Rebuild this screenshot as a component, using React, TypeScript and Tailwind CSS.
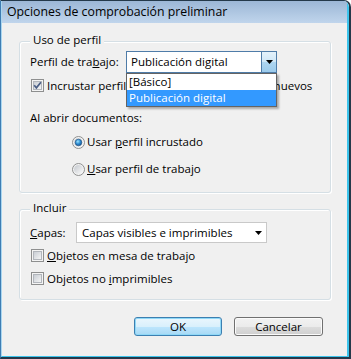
import React from "react";

function CheckBox({ checked }: { checked?: boolean }) {
  return (
    <svg width="13" height="13" viewBox="0 0 13 13" className="block shrink-0">
      <defs>
        <linearGradient id="cbg" x1="0" y1="0" x2="1" y2="1">
          <stop offset="0" stopColor="#c6cbd2" />
          <stop offset="1" stopColor="#f7f7f7" />
        </linearGradient>
      </defs>
      <rect x="0.5" y="0.5" width="12" height="12" fill="#f4f4f4" stroke="#8e8f8f" />
      <rect x="2.5" y="2.5" width="8" height="8" fill="url(#cbg)" stroke="#b2b6bc" />
      {checked && (
        <path d="M3.2 6.3 L5.4 8.9 L9.9 3.3" fill="none" stroke="#4a5e85" strokeWidth="1.7" />
      )}
    </svg>
  );
}

function Radio({ checked }: { checked?: boolean }) {
  return (
    <svg width="13" height="13" viewBox="0 0 13 13" className="block shrink-0">
      <defs>
        <linearGradient id="rbg" x1="0" y1="0" x2="1" y2="1">
          <stop offset="0" stopColor="#c4c8ce" />
          <stop offset="1" stopColor="#fafafa" />
        </linearGradient>
        <radialGradient id="rdot" cx="0.4" cy="0.35" r="0.75">
          <stop offset="0" stopColor="#9be4ff" />
          <stop offset="0.5" stopColor="#2b8ad0" />
          <stop offset="1" stopColor="#154c86" />
        </radialGradient>
      </defs>
      <circle cx="6.5" cy="6.5" r="6" fill="#f3f3f3" stroke="#8e8f8f" />
      <circle cx="6.5" cy="6.5" r="4.5" fill="url(#rbg)" />
      {checked && <circle cx="6.5" cy="6.5" r="3.3" fill="url(#rdot)" stroke="#1f4f7f" strokeWidth="0.6" />}
    </svg>
  );
}

function Arrow() {
  return (
    <svg width="7" height="4" viewBox="0 0 7 4" className="block shrink-0">
      <path d="M0 0 H7 L3.5 4 Z" fill="#000" />
    </svg>
  );
}

function Group({ title, className, children }: { title: string; className: string; children: React.ReactNode }) {
  return (
    <div
      className={
        "relative border border-[#d5dfe5] rounded-[3px] shadow-[inset_1px_1px_0_#ffffff,1px_1px_0_#ffffff] " +
        className
      }
    >
      <span className="absolute left-[10px] -top-[10px] px-[3px] bg-[#f0f0f0] leading-[16px]">{title}</span>
      {children}
    </div>
  );
}

export default function App() {
  return (
    <div className="w-[351px] h-[359px] flex flex-col overflow-hidden rounded-tr-[7px] border-t border-r-2 border-b-2 border-[#24394a] border-l border-l-[#3e7db3] bg-[#f0f0f0] font-['Open_Sans',sans-serif] text-[11.5px] leading-[16px] text-black">
      <div className="flex-1 flex flex-col rounded-tr-[6px] border-r-2 border-b border-[#3cc4ec] border-l border-l-[#a9d6f0]">
        <div className="h-[22px] shrink-0 pl-[5px] pt-[3px] text-[12.3px] leading-[16px] bg-[linear-gradient(to_bottom,#9cb7d6,#c0d5ec)]">
          Opciones de comprobación preliminar
        </div>
        <div className="flex flex-col pl-[17px] pr-[16px]">
          <Group title="Uso de perfil" className="mt-[18px] h-[152px]">
            <div className="flex flex-col pl-[10px] pt-[9px]">
              <div className="flex items-center h-[22px]">
                <span className="w-[96px] shrink-0 whitespace-nowrap">
                  Perfil de tra<u>b</u>ajo:
                </span>
                <div className="relative z-10 w-[151px] h-[22px] flex items-center border border-[#4f7ca8] bg-white">
                  <span className="flex-1 pl-[4px] whitespace-nowrap">Publicación digital</span>
                  <div className="w-[15px] h-full flex items-center justify-center border-l border-[#4f7ca8] bg-[linear-gradient(to_bottom,#e4f2fb_0%,#cfe7f7_50%,#aed6f1_50%,#9ccbec_100%)]">
                    <Arrow />
                  </div>
                  <div className="absolute -left-[1px] top-[21px] w-[151px] h-[34px] flex flex-col border border-[#646464] bg-white shadow-[2px_2px_2px_rgba(0,0,0,0.3)]">
                    <div className="h-[16px] pl-[2px] whitespace-nowrap leading-[16px]">[Básico]</div>
                    <div className="h-[16px] pl-[2px] whitespace-nowrap leading-[16px] bg-[#3399ff] text-white">
                      Publicación digital
                    </div>
                  </div>
                </div>
              </div>
              <div className="flex items-center gap-[3px] h-[13px] mt-[6px] pl-[1px]">
                <CheckBox checked />
                <span className="whitespace-nowrap">
                  Incrustar perfil <span className="invisible">de trabajo en documentos</span> nuevos
                </span>
              </div>
              <div className="h-[16px] mt-[18px] whitespace-nowrap">Al abrir documentos:</div>
              <div className="flex items-center gap-[2px] h-[16px] mt-[8px] ml-[42px]">
                <Radio checked />
                <span className="whitespace-nowrap">
                  Usar <u>p</u>erfil incrustado
                </span>
              </div>
              <div className="flex items-center gap-[2px] h-[16px] mt-[11px] ml-[42px]">
                <Radio />
                <span className="whitespace-nowrap">
                  <u>U</u>sar perfil de trabajo
                </span>
              </div>
            </div>
          </Group>
          <Group title="Incluir" className="mt-[16px] h-[91px]">
            <div className="flex flex-col pl-[10px] pt-[12px]">
              <div className="flex items-center h-[21px]">
                <span className="w-[46px] shrink-0">
                  <u>C</u>apas:
                </span>
                <div className="w-[191px] h-[21px] flex items-center border border-[#c9c9c9] bg-white pl-[5px] pr-[4px]">
                  <span className="flex-1 whitespace-nowrap">Capas visibles e imprimibles</span>
                  <Arrow />
                </div>
              </div>
              <div className="flex items-center gap-[3px] h-[13px] mt-[6px] pl-[1px]">
                <CheckBox />
                <span className="whitespace-nowrap">
                  <u>O</u>bjetos en mesa de trabajo
                </span>
              </div>
              <div className="flex items-center gap-[3px] h-[13px] mt-[10px] pl-[1px]">
                <CheckBox />
                <span className="whitespace-nowrap">
                  Objetos no <u>i</u>mprimibles
                </span>
              </div>
            </div>
          </Group>
          <div className="flex mt-[17px]">
            <button className="ml-[115px] w-[88px] h-[19px] flex items-center justify-center rounded-[3px] border border-[#3c7fb1] shadow-[inset_0_0_0_1px_#8fd8f7] bg-[linear-gradient(to_bottom,#eaf6fd_0%,#d9f0fc_50%,#bee6fd_50%,#a7d9f5_100%)]">
              OK
            </button>
            <button className="ml-[12px] w-[89px] h-[19px] flex items-center justify-center rounded-[3px] border border-[#707070] shadow-[inset_0_0_0_1px_#fbfbfb] bg-[linear-gradient(to_bottom,#f2f2f2_0%,#ebebeb_50%,#dddddd_50%,#cfcfcf_100%)]">
              Cancelar
            </button>
          </div>
        </div>
      </div>
    </div>
  );
}
